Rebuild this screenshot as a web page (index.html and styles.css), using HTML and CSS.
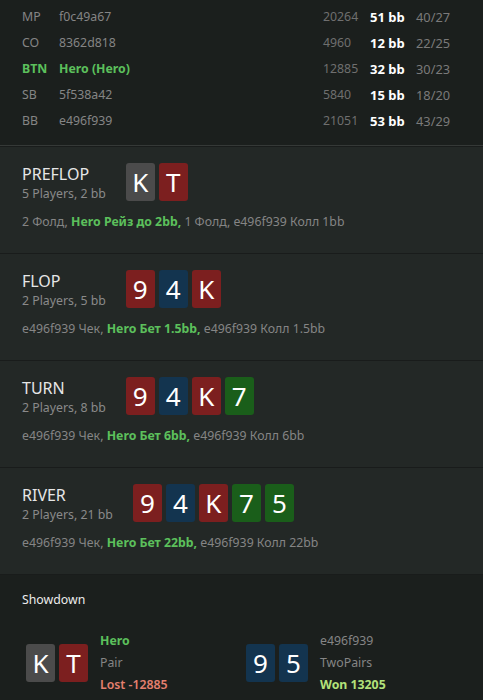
FILE: index.html
```html
<!DOCTYPE html>
<html lang="ru">
<head>
<meta charset="utf-8">
<link rel="stylesheet" href="styles.css">
</head>
<body>
<div class="hand">
  <div class="players">
    <div class="prow"><span class="pos">MP</span><span class="name">f0c49a67</span><span class="chips">20264</span><span class="bb">51 bb</span><span class="ratio">40/27</span></div>
    <div class="prow"><span class="pos">CO</span><span class="name">8362d818</span><span class="chips">4960</span><span class="bb">12 bb</span><span class="ratio">22/25</span></div>
    <div class="prow hero"><span class="pos">BTN</span><span class="name">Hero (Hero)</span><span class="chips">12885</span><span class="bb">32 bb</span><span class="ratio">30/23</span></div>
    <div class="prow"><span class="pos">SB</span><span class="name">5f538a42</span><span class="chips">5840</span><span class="bb">15 bb</span><span class="ratio">18/20</span></div>
    <div class="prow"><span class="pos">BB</span><span class="name">e496f939</span><span class="chips">21051</span><span class="bb">53 bb</span><span class="ratio">43/29</span></div>
  </div>

  <div class="street">
    <div class="street-head">
      <div class="street-info">
        <div class="street-title">PREFLOP</div>
        <div class="street-sub">5 Players, 2 bb</div>
      </div>
      <div class="cards"><span class="card grey">K</span><span class="card red">T</span></div>
    </div>
    <div class="actions">2 Фолд, <b class="hl">Hero Рейз до 2bb,</b> 1 Фолд, e496f939 Колл 1bb</div>
  </div>

  <div class="street">
    <div class="street-head">
      <div class="street-info">
        <div class="street-title">FLOP</div>
        <div class="street-sub">2 Players, 5 bb</div>
      </div>
      <div class="cards"><span class="card red">9</span><span class="card blue">4</span><span class="card red">K</span></div>
    </div>
    <div class="actions">e496f939 Чек, <b class="hl">Hero Бет 1.5bb,</b> e496f939 Колл 1.5bb</div>
  </div>

  <div class="street">
    <div class="street-head">
      <div class="street-info">
        <div class="street-title">TURN</div>
        <div class="street-sub">2 Players, 8 bb</div>
      </div>
      <div class="cards"><span class="card red">9</span><span class="card blue">4</span><span class="card red">K</span><span class="card green">7</span></div>
    </div>
    <div class="actions">e496f939 Чек, <b class="hl">Hero Бет 6bb,</b> e496f939 Колл 6bb</div>
  </div>

  <div class="street">
    <div class="street-head">
      <div class="street-info">
        <div class="street-title">RIVER</div>
        <div class="street-sub">2 Players, 21 bb</div>
      </div>
      <div class="cards"><span class="card red">9</span><span class="card blue">4</span><span class="card red">K</span><span class="card green">7</span><span class="card green">5</span></div>
    </div>
    <div class="actions">e496f939 Чек, <b class="hl">Hero Бет 22bb,</b> e496f939 Колл 22bb</div>
  </div>

  <div class="showdown">
    <div class="sd-title">Showdown</div>
    <div class="sd-players">
      <div class="sd-player">
        <div class="cards"><span class="card grey">K</span><span class="card red">T</span></div>
        <div class="sd-info">
          <div class="sd-name hero-name">Hero</div>
          <div class="sd-hand">Pair</div>
          <div class="sd-result lost">Lost -12885</div>
        </div>
      </div>
      <div class="sd-player">
        <div class="cards"><span class="card blue">9</span><span class="card blue">5</span></div>
        <div class="sd-info">
          <div class="sd-name">e496f939</div>
          <div class="sd-hand">TwoPairs</div>
          <div class="sd-result won">Won 13205</div>
        </div>
      </div>
    </div>
  </div>
</div>
</body>
</html>
```

FILE: styles.css
```css
* { box-sizing: border-box; }
html, body {
  margin: 0;
  padding: 0;
  background: #1b1f1d;
}
body {
  font-family: "Noto Sans", "Open Sans", sans-serif;
  font-size: 12.3px;
  color: #8a8a8a;
  width: 483px;
  height: 700px;
  overflow: hidden;
}
.hand { width: 483px; }

.players {
  background: #1b1f1d;
  padding: 4px 0 11px 22px;
  border-bottom: 1px solid #353937;
}
.prow {
  display: grid;
  grid-template-columns: 37px 264px 47px 46px 1fr;
  height: 26px;
  align-items: center;
  line-height: 26px;
  white-space: nowrap;
}
.pos { color: #858585; }
.name { color: #858585; }
.chips { color: #6f6f6f; }
.bb { color: #ffffff; font-weight: 700; font-size: 13px; }
.ratio { color: #7a7a7a; font-size: 12.8px; }
.prow.hero .pos, .prow.hero .name { color: #5cc05c; font-weight: 700; }

.street {
  background: #232826;
  padding: 16px 22px 23px;
  border-top: 1px solid #191c1b;
  height: 107px;
}
.street:first-of-type { border-top: none; }
.street-head {
  display: flex;
  align-items: flex-start;
  gap: 20px;
}
.street-info { padding-top: 1px; }
.street-title {
  color: #e6e6e6;
  font-size: 16px;
  line-height: 20px;
}
.street-sub {
  color: #8a8a8a;
  font-size: 12.3px;
  line-height: 19px;
}
.cards { display: flex; gap: 4px; }
.card {
  width: 29px;
  height: 38px;
  border-radius: 3px;
  color: #ffffff;
  font-size: 26px;
  line-height: 38px;
  text-align: center;
}
.card.grey { background: #4b4b4b; }
.card.red { background: #7c1f1f; }
.card.blue { background: #13344f; }
.card.green { background: #1a5e1a; }

.actions {
  margin-top: 10px;
  line-height: 18px;
  color: #858585;
  white-space: nowrap;
}
.hl { color: #5cc05c; font-weight: 700; }

.showdown {
  background: #1b1f1d;
  border-top: 1px solid #191c1b;
  padding: 17px 22px 0;
  height: 126px;
}
.sd-title {
  color: #ececec;
  line-height: 16px;
  font-weight: 400;
}
.sd-players {
  display: grid;
  grid-template-columns: 220px 1fr;
  margin-top: 22px;
  padding-left: 4px;
}
.sd-player {
  display: flex;
  align-items: center;
  gap: 12px;
}
.sd-info div { line-height: 22px; white-space: nowrap; }
.sd-name { color: #858585; }
.hero-name { color: #5cc05c; font-weight: 700; }
.sd-hand { color: #858585; }
.lost { color: #e5806f; font-weight: 600; }
.won { color: #b3e27a; font-weight: 700; }
```
